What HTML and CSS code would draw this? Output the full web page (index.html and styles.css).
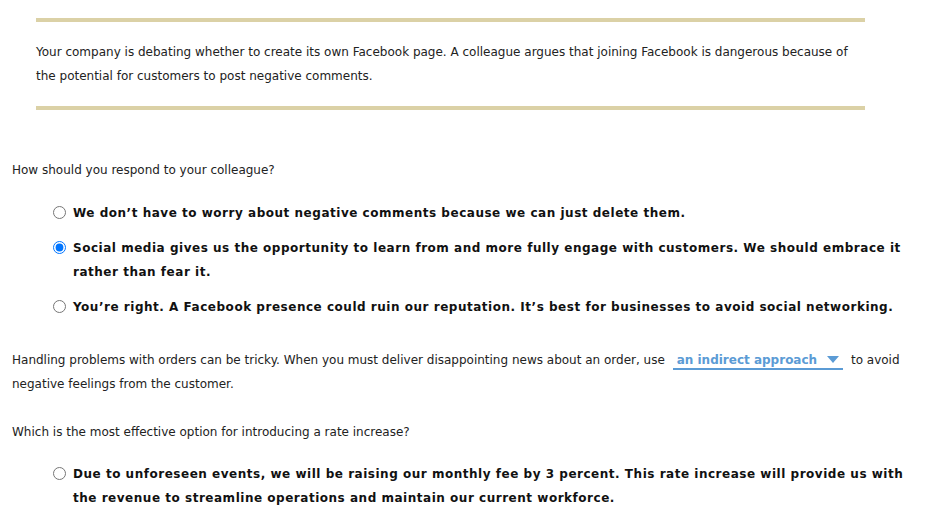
FILE: index.html
```html
<!DOCTYPE html>
<html lang="en">
<head>
  <meta charset="UTF-8" />
  <title>Business Communication Quiz</title>
  <link rel="stylesheet" href="styles.css">
</head>
<body>
  <div class="page">
    <div class="scenario">
      <p>Your company is debating whether to create its own Facebook page. A colleague argues that joining Facebook is dangerous because of the potential for customers to post negative comments.</p>
    </div>

    <p class="question q-first">How should you respond to your colleague?</p>
    <ul class="options">
      <li><label><input type="radio" name="q1"><span>We don’t have to worry about negative comments because we can just delete them.</span></label></li>
      <li><label><input type="radio" name="q1" checked><span>Social media gives us the opportunity to learn from and more fully engage with customers. We should embrace it rather than fear it.</span></label></li>
      <li><label><input type="radio" name="q1"><span>You’re right. A Facebook presence could ruin our reputation. It’s best for businesses to avoid social networking.</span></label></li>
    </ul>

    <p class="question q-fill">Handling problems with orders can be tricky. When you must deliver disappointing news about an order, use <span class="dropdown">an indirect approach<svg width="12" height="7" viewBox="0 0 12 7"><polygon points="0,0 12,0 6,7" fill="#5b9bd5"/></svg></span> to avoid negative feelings from the customer.</p>

    <p class="question q-last">Which is the most effective option for introducing a rate increase?</p>
    <ul class="options options-last">
      <li><label><input type="radio" name="q3"><span>Due to unforeseen events, we will be raising our monthly fee by 3 percent. This rate increase will provide us with the revenue to streamline operations and maintain our current workforce.</span></label></li>
    </ul>
  </div>
</body>
</html>
```

FILE: styles.css
```css
body {
  margin: 0;
  font-family: "DejaVu Sans", Verdana, sans-serif;
  font-size: 12px;
  line-height: 24px;
  color: #222;
  background: #fff;
}
.page {
  padding: 0 12px;
}
.scenario {
  width: 829px;
  margin: 18px 0 0 24px;
  border-top: 4px solid #dbd1a6;
  border-bottom: 4px solid #dbd1a6;
  padding: 18px 0 18px;
}
.scenario p {
  margin: 0;
}
.question {
  margin: 0;
}
.q-first {
  margin-top: 48px;
}
.q-fill {
  margin-top: 29px;
}
.q-last {
  margin-top: 24px;
}
.options {
  list-style: none;
  margin: 19px 0 0;
  padding: 0 0 0 41px;
}
.options-last {
  margin-top: 18px;
}
.options li + li {
  margin-top: 11px;
}
.options label {
  display: flex;
  align-items: flex-start;
  font-weight: bold;
  letter-spacing: 0.52px;
  color: #111;
}
.options input {
  margin: 5px 7px 0 0;
  width: 13px;
  height: 13px;
  flex: none;
}
.dropdown {
  color: #5b9bd5;
  font-weight: bold;
  border-bottom: 2px solid #5b9bd5;
  padding: 0 4px 1px;
  margin: 0 4px;
}
.dropdown svg {
  margin-left: 10px;
  vertical-align: 1px;
}
```
